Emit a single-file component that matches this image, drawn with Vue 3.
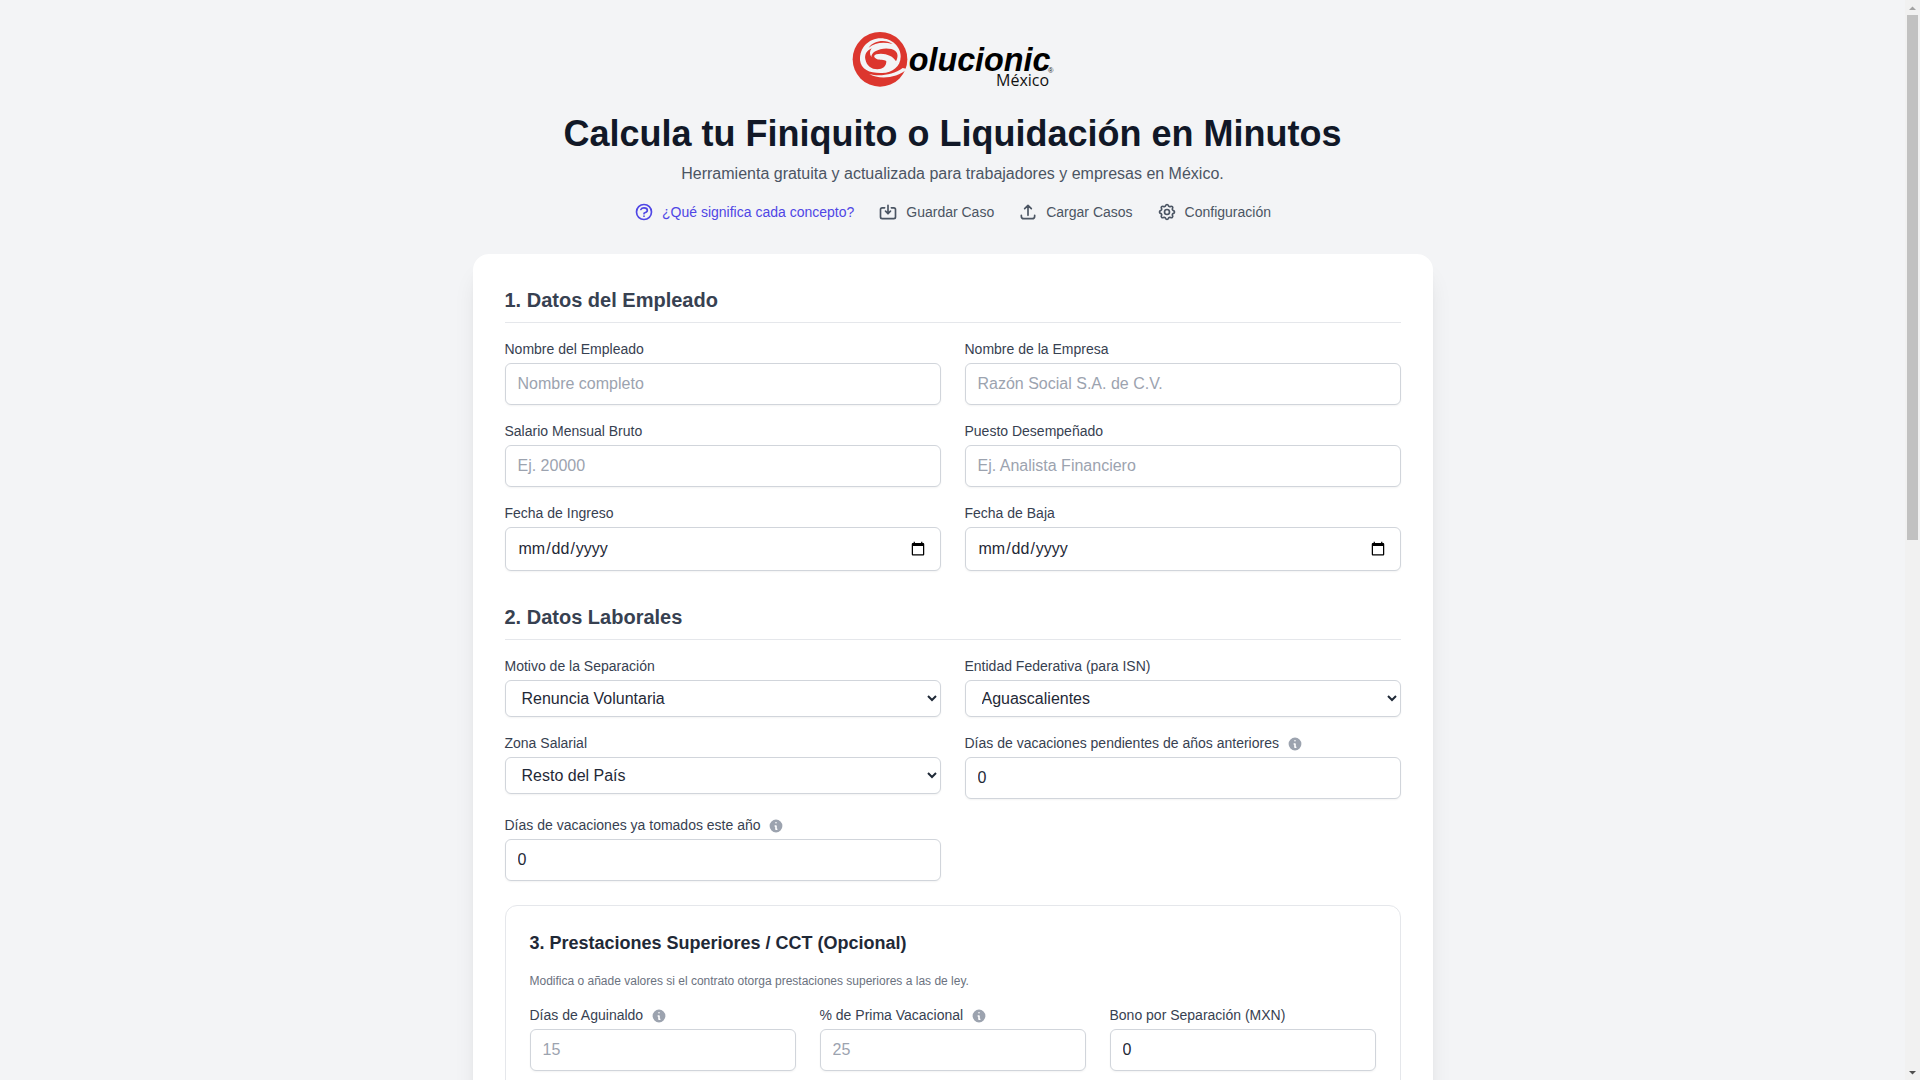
<template>
  <div class="app">
    <div ref="viewport" class="page">
      <div class="container">
        <header class="header">
          <svg class="logo" viewBox="36 36 606 174" role="img" aria-label="Solucionic México">
            <!-- Disco rojo con la S -->
            <circle cx="120" cy="118" r="82" fill="#dc362e" />
            <path
              fill="#f3f4f6"
              d="M60 120C58 84 86 55 122 55C156 55 182 80 182 110C182 138 158 158 126 159C90 160 63 150 60 120Z"
            />
            <path fill="#f3f4f6" d="M88 162C118 171 160 164 188 144L202 147C168 177 114 178 88 162Z" />
            <path fill="#dc362e" d="M86 83C100 62 136 56 158 72C131 65 105 67 86 83Z" />
            <path
              fill="#dc362e"
              d="M95 85C80 92 73 104 76 118C80 138 94 148 112 148C128 148 139 140 139 124C132 117 120 121 110 117C101 113 100 106 109 103C120 99 138 101 149 107C158 111 164 117 168 124C178 106 172 91 154 87C137 83 119 86 106 94C99 98 94 104 94 111C88 102 89 93 95 85Z"
            />
            <text x="206" y="154" class="logo-name">olucionic</text>
            <text x="624" y="158" class="logo-mark">®</text>
            <text x="468" y="198" class="logo-country">México</text>
          </svg>
          <h1>Calcula tu Finiquito o Liquidación en Minutos</h1>
          <p>Herramienta gratuita y actualizada para trabajadores y empresas en México.</p>
          <nav class="actions">
            <button
              v-for="action in actions"
              :key="action.label"
              type="button"
              :class="{ highlighted: action.highlighted }"
            >
              <svg viewBox="0 0 24 24" aria-hidden="true">
                <path v-for="d in action.paths" :key="d" :d="d" />
              </svg>
              <span>{{ action.label }}</span>
            </button>
          </nav>
        </header>

        <main class="card">
          <!-- Secciones 1 y 2 -->
          <section v-for="section in sections" :key="section.title" class="section">
            <h2>{{ section.title }}</h2>
            <div class="grid">
              <div v-for="field in section.fields" :key="field.id" class="field">
                <label :for="field.id">
                  {{ field.label }}
                  <svg v-if="field.info" class="info" viewBox="0 0 20 20" aria-hidden="true">
                    <path fill-rule="evenodd" :d="infoPath" />
                  </svg>
                </label>
                <select v-if="field.options" :id="field.id" v-model="form[field.id]">
                  <option v-for="option in field.options" :key="option" :value="option">{{ option }}</option>
                </select>
                <input
                  v-else
                  :id="field.id"
                  v-model="form[field.id]"
                  :type="field.type"
                  :placeholder="field.placeholder"
                />
              </div>
            </div>
          </section>

          <!-- Sección 3 -->
          <section class="benefits">
            <h3>3. Prestaciones Superiores / CCT (Opcional)</h3>
            <p>Modifica o añade valores si el contrato otorga prestaciones superiores a las de ley.</p>
            <div class="grid three">
              <div v-for="field in benefits" :key="field.id" class="field">
                <label :for="field.id">
                  {{ field.label }}
                  <svg v-if="field.info" class="info" viewBox="0 0 20 20" aria-hidden="true">
                    <path fill-rule="evenodd" :d="infoPath" />
                  </svg>
                </label>
                <input :id="field.id" v-model="form[field.id]" type="number" :placeholder="field.placeholder" />
              </div>
            </div>
          </section>
        </main>
      </div>
    </div>

    <!-- Barra de desplazamiento -->
    <div class="scrollbar">
      <button type="button" class="arrow" aria-label="Subir" @click="scrollPage(-80)">
        <svg viewBox="0 0 15 14" aria-hidden="true"><path d="M4 9h7L7.500 5.500z" fill="#a3a3a3" /></svg>
      </button>
      <div class="track">
        <div class="thumb"></div>
      </div>
      <button type="button" class="arrow" aria-label="Bajar" @click="scrollPage(80)">
        <svg viewBox="0 0 15 14" aria-hidden="true"><path d="M4 5h7L7.500 8.500z" fill="#505050" /></svg>
      </button>
    </div>
  </div>
</template>

<script setup>
import { reactive, ref } from 'vue';

const viewport = ref(null);

// Valores del formulario
const form = reactive({
  nombre: '',
  empresa: '',
  salario: '',
  puesto: '',
  ingreso: '',
  baja: '',
  motivo: 'Renuncia Voluntaria',
  entidad: 'Aguascalientes',
  zona: 'Resto del País',
  pendientes: 0,
  tomados: 0,
  aguinaldo: '',
  prima: '',
  bono: 0,
});

const actions = [
  {
    label: '¿Qué significa cada concepto?',
    highlighted: true,
    paths: [
      'M8.228 9c.549-1.165 2.03-2 3.772-2 2.21 0 4 1.343 4 3 0 1.4-1.278 2.575-3.006 2.907-.542.104-.994.54-.994 1.093m0 3h.01M21 12a9 9 0 11-18 0 9 9 0 0118 0z',
    ],
  },
  {
    label: 'Guardar Caso',
    paths: ['M8 7H5a2 2 0 00-2 2v9a2 2 0 002 2h14a2 2 0 002-2V9a2 2 0 00-2-2h-3m-1 4l-3 3m0 0l-3-3m3 3V4'],
  },
  {
    label: 'Cargar Casos',
    paths: ['M4 16v1a3 3 0 003 3h10a3 3 0 003-3v-1m-4-8l-4-4m0 0L8 8m4-4v12'],
  },
  {
    label: 'Configuración',
    paths: [
      'M10.325 4.317c.426-1.756 2.924-1.756 3.35 0a1.724 1.724 0 002.573 1.066c1.543-.94 3.31.826 2.37 2.37a1.724 1.724 0 001.065 2.572c1.756.426 1.756 2.924 0 3.35a1.724 1.724 0 00-1.066 2.573c.94 1.543-.826 3.31-2.37 2.37a1.724 1.724 0 00-2.572 1.065c-.426 1.756-2.924 1.756-3.35 0a1.724 1.724 0 00-2.573-1.066c-1.543.94-3.31-.826-2.37-2.37a1.724 1.724 0 00-1.065-2.572c-1.756-.426-1.756-2.924 0-3.35a1.724 1.724 0 001.066-2.573c-.94-1.543.826-3.31 2.37-2.37.996.608 2.296.07 2.572-1.065z',
      'M15 12a3 3 0 11-6 0 3 3 0 016 0z',
    ],
  },
];

const sections = [
  {
    title: '1. Datos del Empleado',
    fields: [
      { id: 'nombre', label: 'Nombre del Empleado', type: 'text', placeholder: 'Nombre completo' },
      { id: 'empresa', label: 'Nombre de la Empresa', type: 'text', placeholder: 'Razón Social S.A. de C.V.' },
      { id: 'salario', label: 'Salario Mensual Bruto', type: 'number', placeholder: 'Ej. 20000' },
      { id: 'puesto', label: 'Puesto Desempeñado', type: 'text', placeholder: 'Ej. Analista Financiero' },
      { id: 'ingreso', label: 'Fecha de Ingreso', type: 'date' },
      { id: 'baja', label: 'Fecha de Baja', type: 'date' },
    ],
  },
  {
    title: '2. Datos Laborales',
    fields: [
      { id: 'motivo', label: 'Motivo de la Separación', options: ['Renuncia Voluntaria'] },
      { id: 'entidad', label: 'Entidad Federativa (para ISN)', options: ['Aguascalientes'] },
      { id: 'zona', label: 'Zona Salarial', options: ['Resto del País'] },
      { id: 'pendientes', label: 'Días de vacaciones pendientes de años anteriores', type: 'number', info: true },
      { id: 'tomados', label: 'Días de vacaciones ya tomados este año', type: 'number', info: true },
    ],
  },
];

const benefits = [
  { id: 'aguinaldo', label: 'Días de Aguinaldo', placeholder: '15', info: true },
  { id: 'prima', label: '% de Prima Vacacional', placeholder: '25', info: true },
  { id: 'bono', label: 'Bono por Separación (MXN)' },
];

const infoPath =
  'M18 10a8 8 0 11-16 0 8 8 0 0116 0zm-7-4a1 1 0 11-2 0 1 1 0 012 0zM9 9a1 1 0 000 2v3a1 1 0 001 1h1a1 1 0 100-2v-3a1 1 0 00-1-1H9z';

// Desplaza el contenido con las flechas de la barra
const scrollPage = (amount) => {
  viewport.value.scrollBy({ top: amount });
};
</script>

<style>
body {
  background-color: #f3f4f6;
}
</style>

<style scoped>
.app,
.app * {
  box-sizing: border-box;
}

.app {
  display: flex;
  height: 100vh;
  color: #1f2937;
  font-family: 'Liberation Sans', Arial, sans-serif;
  font-size: 16px;
  line-height: 24px;
}

.page {
  flex: 1;
  min-width: 0;
  padding: 32px;
  overflow-y: auto;
  scrollbar-width: none;
}

.container {
  max-width: 960px;
  margin: 0 auto;
}

h1,
h2,
h3,
p {
  margin: 0;
}

/* Encabezado */
.header {
  display: flex;
  flex-direction: column;
  align-items: center;
  margin-bottom: 32px;
  text-align: center;
}

.logo {
  width: 202px;
  height: 58px;
  margin-bottom: 24px;
  overflow: visible;
}

.logo-name {
  font: italic bold 97px 'Liberation Sans', Arial, sans-serif;
  fill: #000;
}

.logo-mark {
  font: 22px 'Liberation Sans', Arial, sans-serif;
  fill: #222;
}

.logo-country {
  font: 48px 'Open Sans', sans-serif;
  fill: #111;
}

.header h1 {
  color: #111827;
  font-size: 36px;
  line-height: 40px;
}

.header p {
  margin-top: 8px;
  color: #4b5563;
}

.actions {
  display: flex;
  flex-wrap: wrap;
  justify-content: center;
  gap: 24px;
  margin-top: 16px;
}

.actions button {
  display: flex;
  align-items: center;
  gap: 8px;
  padding: 0;
  border: none;
  background: none;
  color: #4b5563;
  font-family: inherit;
  font-size: 14px;
  line-height: 20px;
  cursor: pointer;
}

.actions button.highlighted {
  color: #4f46e5;
}

.actions svg {
  width: 20px;
  height: 20px;
  fill: none;
  stroke: currentColor;
  stroke-width: 2;
  stroke-linecap: round;
  stroke-linejoin: round;
}

/* Tarjeta principal */
.card {
  padding: 32px;
  border-radius: 16px;
  background-color: #fff;
  box-shadow: 0 20px 25px -5px rgba(0, 0, 0, 0.1), 0 8px 10px -6px rgba(0, 0, 0, 0.1);
}

.section {
  margin-bottom: 32px;
}

.section:nth-of-type(2) {
  margin-bottom: 24px;
}

.section h2 {
  margin-bottom: 16px;
  padding-bottom: 8px;
  border-bottom: 1px solid #e5e7eb;
  color: #374151;
  font-size: 20px;
  line-height: 28px;
}

.grid {
  display: grid;
  grid-template-columns: repeat(2, 1fr);
  gap: 16px 24px;
}

.grid.three {
  grid-template-columns: repeat(3, 1fr);
}

.field label {
  display: block;
  margin-bottom: 4px;
  color: #374151;
  font-size: 14px;
  line-height: 20px;
}

.info {
  width: 16px;
  height: 16px;
  margin-left: 4px;
  vertical-align: middle;
  fill: #9ca3af;
}

.field input,
.field select {
  display: block;
  width: 100%;
  padding: 8px 12px;
  border: 1px solid #d1d5db;
  border-radius: 6px;
  background-color: #fff;
  box-shadow: 0 1px 2px rgba(0, 0, 0, 0.05);
  color: #1f2937;
  font-family: inherit;
  font-size: 16px;
  line-height: 24px;
}

.field input::placeholder {
  color: #9ca3af;
}

/* Prestaciones */
.benefits {
  padding: 24px;
  border: 1px solid #e5e7eb;
  border-radius: 12px;
}

.benefits h3 {
  color: #1f2937;
  font-size: 18px;
  line-height: 27px;
}

.benefits p {
  margin: 16px 0;
  color: #6b7280;
  font-size: 12px;
  line-height: 16px;
}

/* Barra de desplazamiento */
.scrollbar {
  display: flex;
  flex-direction: column;
  width: 15px;
  background-color: #f1f1f1;
}

.arrow {
  height: 15px;
  padding: 0;
  border: none;
  background: none;
}

.arrow svg {
  display: block;
  width: 15px;
  height: 14px;
}

.track {
  flex: 1;
  padding: 0 2px;
}

.thumb {
  height: 50%;
  background-color: #c1c1c1;
}

@media (max-width: 768px) {
  .grid,
  .grid.three {
    grid-template-columns: 1fr;
  }
}
</style>
